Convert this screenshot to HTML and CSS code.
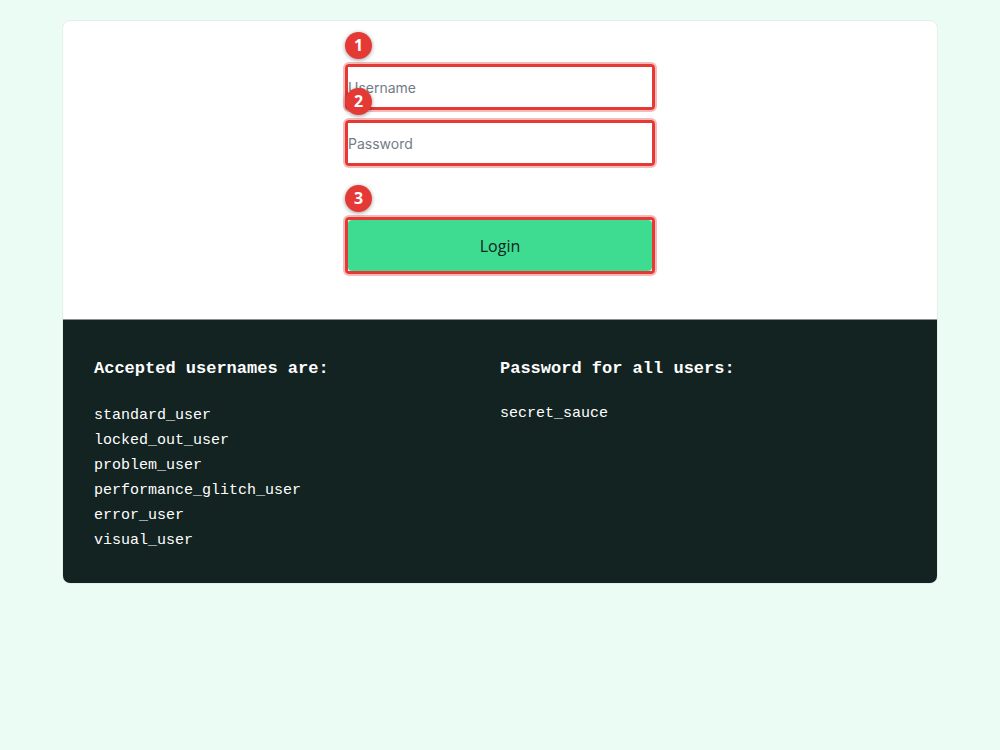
FILE: index.html
```html
<!DOCTYPE html>
<html lang="en">
<head>
<meta charset="utf-8">
<title>Login</title>
<link rel="stylesheet" href="styles.css">
</head>
<body>
<main class="card">
  <form class="login">
    <div class="field marked">
      <span class="badge">1</span>
      <input class="text-input" type="text" placeholder="Username" aria-label="Username">
    </div>
    <div class="field marked">
      <span class="badge">2</span>
      <input class="text-input" type="password" placeholder="Password" aria-label="Password">
    </div>
    <div class="submit marked">
      <span class="badge">3</span>
      <button class="login-button" type="button">Login</button>
    </div>
  </form>
  <section class="credentials">
    <div class="column">
      <h4 class="heading">Accepted usernames are:</h4>
      <ul class="list">
        <li>standard_user</li>
        <li>locked_out_user</li>
        <li>problem_user</li>
        <li>performance_glitch_user</li>
        <li>error_user</li>
        <li>visual_user</li>
      </ul>
    </div>
    <div class="column">
      <h4 class="heading">Password for all users:</h4>
      <p class="secret">secret_sauce</p>
    </div>
  </section>
</main>
</body>
</html>
```
FILE: styles.css
```css
* { box-sizing: border-box; }
body {
  margin: 0;
  padding: 20px 62px;
  background: #ebfcf5;
  font-family: Inter, "Liberation Sans", sans-serif;
}
.card {
  border: 1px solid #e6eeeb;
  border-radius: 8px;
  background: #fff;
  overflow: hidden;
}
.login {
  width: 310px;
  max-width: 100%;
  margin: 0 auto;
  padding: 43px 0 45px;
}
.marked {
  position: relative;
  border: 3px solid #e53935;
  border-radius: 4px;
  box-shadow: 0 0 0 2px rgba(229, 57, 53, 0.35);
}
.field { margin-bottom: 10px; }
.submit { margin-top: 51px; }
.text-input {
  display: block;
  width: 100%;
  height: 40px;
  padding: 0;
  border: 0;
  background: #fff;
  font: 14px Inter, sans-serif;
  color: #132322;
  outline: 0;
}
.text-input::placeholder { color: #747b87; opacity: 1; }
.login-button {
  display: block;
  width: 100%;
  height: 51px;
  border: 0;
  border-radius: 4px;
  background: #3ddc91;
  color: #132322;
  font: 16px "Open Sans", sans-serif;
}
.badge {
  position: absolute;
  z-index: 1;
  left: -3px;
  top: -35px;
  width: 27px;
  height: 27px;
  border-radius: 50%;
  background: #e53935;
  box-shadow: 0 1px 4px rgba(0, 0, 0, 0.4);
  color: #fff;
  font: bold 16px/27px "Noto Sans", sans-serif;
  text-align: center;
}
.credentials {
  display: grid;
  grid-template-columns: 1fr 1fr;
  padding: 36px 31px 30px;
  border-top: 1px solid #88918f;
  background: #132322;
  color: #fff;
  font-family: "Liberation Mono", monospace;
}
.heading {
  margin: 0 0 22px;
  font-size: 17px;
  line-height: 25px;
}
.list {
  margin: 0;
  padding: 0;
  list-style: none;
  font-size: 15px;
  line-height: 25px;
}
.secret {
  margin: 0;
  font-size: 15px;
  line-height: 21px;
}
```
